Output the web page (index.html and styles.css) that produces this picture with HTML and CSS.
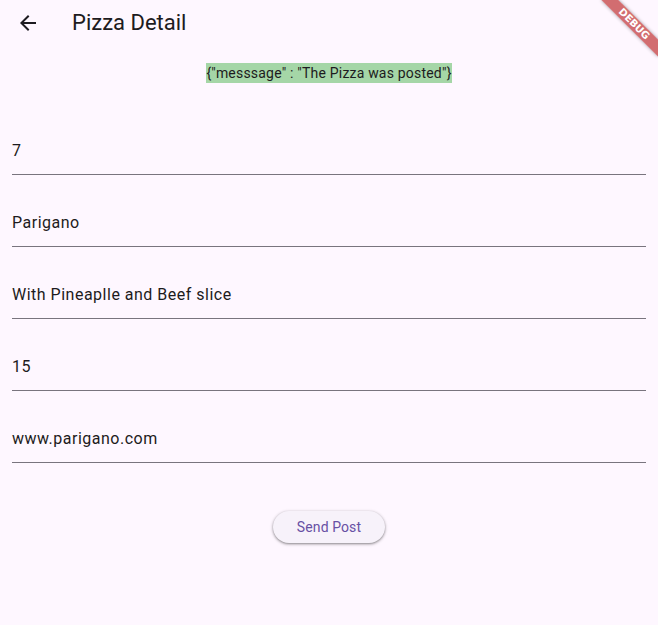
FILE: index.html
```
<!DOCTYPE html>
<html>
<head>
<meta charset="utf-8">
<link rel="stylesheet" href="styles.css">
</head>
<body>
<div class="app">
  <header class="appbar">
    <button class="back" aria-label="Back">
      <svg width="24" height="24" viewBox="0 0 24 24"><path d="M20 11H7.83l5.59-5.59L12 4l-8 8 8 8 1.41-1.41L7.83 13H20v-2z" fill="#1d1b20"/></svg>
    </button>
    <h1 class="title">Pizza Detail</h1>
  </header>
  <main class="content">
    <div class="msg-row"><span class="msg">{"messsage" : "The Pizza was posted"}</span></div>
    <div class="fields">
      <div class="field">7</div>
      <div class="field">Parigano</div>
      <div class="field">With Pineaplle and Beef slice</div>
      <div class="field">15</div>
      <div class="field">www.parigano.com</div>
    </div>
    <div class="btn-row"><button class="send">Send Post</button></div>
  </main>
  <div class="banner">DEBUG</div>
</div>
</body>
</html>
```
FILE: styles.css
```
html, body {
  margin: 0;
  padding: 0;
  overflow: hidden;
  background: #fef7ff;
}
.app {
  position: relative;
  width: 658px;
  height: 625px;
  overflow: hidden;
  font-family: Roboto, "Noto Sans", sans-serif;
  color: #1d1b20;
}
.appbar {
  height: 44px;
  display: flex;
  align-items: center;
}
.back {
  margin-left: 16px;
  margin-top: 1px;
  width: 24px;
  height: 24px;
  padding: 0;
  border: 0;
  background: none;
  display: flex;
}
.title {
  margin: 2px 0 0 32px;
  font-size: 22px;
  font-weight: 400;
  line-height: 28px;
}
.content {
  padding: 0 12px;
}
.msg-row {
  display: flex;
  justify-content: center;
  padding-top: 19px;
}
.msg {
  background: #a5d6a7;
  font-size: 14px;
  line-height: 20px;
  letter-spacing: 0.2px;
}
.fields {
  margin-top: 44px;
  display: flex;
  flex-direction: column;
  gap: 24px;
}
.field {
  padding: 12px 0 11px;
  font-size: 16px;
  line-height: 24px;
  letter-spacing: 0.5px;
  border-bottom: 1px solid #79747e;
}
.btn-row {
  display: flex;
  justify-content: center;
  margin-top: 48px;
}
.send {
  height: 32px;
  padding: 0 24px;
  border: 0;
  border-radius: 16px;
  background: #f7f2fa;
  color: #6750a4;
  font-family: Roboto, sans-serif;
  font-size: 14px;
  font-weight: 400;
  letter-spacing: 0.1px;
  box-shadow: 0 1px 2px rgba(0,0,0,0.3), 0 1px 3px 1px rgba(0,0,0,0.15);
}
.banner {
  position: absolute;
  left: 618px;
  top: 28px;
  width: 80px;
  height: 12px;
  transform-origin: 40px -28px;
  transform: rotate(45deg);
  background: rgba(183, 28, 28, 0.63);
  box-shadow: 0 0 4px rgba(0,0,0,0.35);
  color: #fff;
  font-family: "DejaVu Sans", sans-serif;
  font-size: 10px;
  font-weight: 900;
  line-height: 12px;
  text-align: center;
  letter-spacing: 0;
}
```
